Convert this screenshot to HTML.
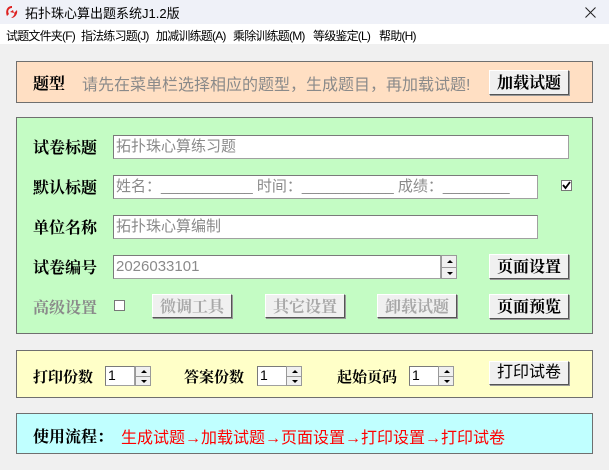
<!DOCTYPE html>
<html><head><meta charset="utf-8"><style>
*{margin:0;padding:0;box-sizing:border-box}
body{width:609px;height:470px;overflow:hidden;background:#f0f0f0;position:relative;font-family:"Liberation Sans","Noto Sans CJK SC","WenQuanYi Zen Hei",sans-serif}
.a{position:absolute}
.title{left:0;top:0;width:609px;height:24px;background:#eff1f8}
.menu{left:0;top:24px;width:609px;height:20px;background:#fff;font-size:12px;color:#000}
.menu span{position:absolute;top:3px;white-space:nowrap;letter-spacing:-0.8px}
.panel{position:absolute;left:16px;width:577px;border:1px solid #6f6f6f}
.lb{position:absolute;font-size:16px;font-weight:bold;color:#000;white-space:nowrap;font-family:"Noto Serif CJK SC","Noto Sans CJK SC",serif}
.in{position:absolute;background:#fff;border:1px solid #a0a0a0;border-top-color:#7a7a7a;border-left-color:#7a7a7a;font-size:15px;color:#8a8a8a;padding-left:2px;line-height:21px;white-space:nowrap;overflow:hidden}
.btn{position:absolute;background:#f0f0f0;border:1px solid #fff;border-right-color:#555;border-bottom-color:#555;box-shadow:1px 1px 0 #999;font-size:16px;font-weight:bold;text-align:center;color:#000;font-family:"Noto Serif CJK SC","Noto Sans CJK SC",serif;line-height:22px}
.dis{color:#a8a8a8}
.sp{position:absolute;width:16px;background:#f0f0f0;border:1px solid #999}
.sp:after{content:"";position:absolute;left:0;right:0;top:50%;border-top:1px solid #999}
.sp i{position:absolute;left:5px;width:0;height:0;border-left:3px solid transparent;border-right:3px solid transparent}
.sp i.u{top:25%;margin-top:-2px;border-bottom:3px solid #000}
.sp i.d{top:75%;margin-top:-1px;border-top:3px solid #000}
.cb{position:absolute;width:11px;height:11px;background:#fff;border:1px solid #777}
</style></head><body>
<div class="a title">
<svg class="a" style="left:4px;top:4px" width="16" height="16" viewBox="0 0 16 16"><path d="M8 2 C3 2 1 7 3 12 L5 10 C3 7 5 4 8 4Z" fill="#d22"/><path d="M6 8 L9 6 L10 9 L13 6 C14 10 11 14 7 14 C10 12 11 10 10 9 Z" fill="#d22"/></svg>
<span class="a" style="left:25px;top:3px;font-size:13px">拓扑珠心算出题系统J1.2版</span>
<svg class="a" style="left:585px;top:7px" width="11" height="11"><path d="M0.5 0.5 L10.5 10.5 M10.5 0.5 L0.5 10.5" stroke="#222" stroke-width="1"/></svg>
</div>
<div class="a menu">
<span style="left:6px">试题文件夹(F)</span><span style="left:81px">指法练习题(J)</span><span style="left:156px">加减训练题(A)</span><span style="left:233px">乘除训练题(M)</span><span style="left:313px">等级鉴定(L)</span><span style="left:379px">帮助(H)</span>
</div>

<div class="panel" style="top:61px;height:42px;background:#ffdfc3"></div>
<div class="lb" style="left:33px;top:71px">题型</div>
<div class="a" style="left:82px;top:71px;font-size:16px;color:#8a8a8a;white-space:nowrap">请先在菜单栏选择相应的题型，生成题目，再加载试题!</div>
<div class="btn" style="left:489px;top:70px;width:80px;height:25px">加载试题</div>

<div class="panel" style="top:117px;height:217px;background:#c4fcc4"></div>
<div class="lb" style="left:33px;top:135px">试卷标题</div>
<div class="in" style="left:113px;top:135px;width:456px;height:24px">拓扑珠心算练习题</div>
<div class="lb" style="left:33px;top:175px">默认标题</div>
<div class="in" style="left:113px;top:175px;width:425px;height:24px">姓名：___________ 时间：___________ 成绩：________</div>
<div class="cb" style="left:561px;top:180px"><svg width="9" height="9" style="position:absolute;left:0;top:0"><path d="M1 4 L3.5 7 L8 1" stroke="#000" stroke-width="1.8" fill="none"/></svg></div>
<div class="lb" style="left:33px;top:215px">单位名称</div>
<div class="in" style="left:113px;top:215px;width:425px;height:24px">拓扑珠心算编制</div>
<div class="lb" style="left:33px;top:255px">试卷编号</div>
<div class="in" style="left:113px;top:255px;width:328px;height:24px">2026033101</div>
<div class="sp" style="left:441px;top:255px;height:24px"><i class="u"></i><i class="d"></i></div>
<div class="btn" style="left:489px;top:254px;width:80px;height:25px">页面设置</div>
<div class="lb" style="left:33px;top:295px;color:#8a8a8a">高级设置</div>
<div class="cb" style="left:114px;top:300px"></div>
<div class="btn dis" style="left:152px;top:294px;width:80px;height:24px">微调工具</div>
<div class="btn dis" style="left:265px;top:294px;width:80px;height:24px">其它设置</div>
<div class="btn dis" style="left:377px;top:294px;width:80px;height:24px">卸载试题</div>
<div class="btn" style="left:489px;top:294px;width:80px;height:25px">页面预览</div>

<div class="panel" style="top:350px;height:48px;background:#ffffc8"></div>
<div class="lb" style="left:33px;top:366px;font-size:15px">打印份数</div>
<div class="in" style="left:105px;top:366px;width:30px;height:20px;color:#000;line-height:17px;font-size:14px">1</div>
<div class="sp" style="left:135px;top:366px;height:20px"><i class="u"></i><i class="d"></i></div>
<div class="lb" style="left:184px;top:366px;font-size:15px">答案份数</div>
<div class="in" style="left:257px;top:366px;width:30px;height:20px;color:#000;line-height:17px;font-size:14px">1</div>
<div class="sp" style="left:286px;top:366px;height:20px"><i class="u"></i><i class="d"></i></div>
<div class="lb" style="left:337px;top:366px;font-size:15px">起始页码</div>
<div class="in" style="left:409px;top:366px;width:30px;height:20px;color:#000;line-height:17px;font-size:14px">1</div>
<div class="sp" style="left:438px;top:366px;height:20px"><i class="u"></i><i class="d"></i></div>
<div class="btn" style="left:489px;top:361px;width:80px;height:24px;font-weight:normal;font-family:'Liberation Sans','Noto Sans CJK SC',sans-serif">打印试卷</div>

<div class="panel" style="top:413px;height:41px;background:#c0ffff"></div>
<div class="lb" style="left:33px;top:424px">使用流程：</div>
<div class="a" style="left:121px;top:424px;font-size:16px;color:#f00;white-space:nowrap">生成试题→加载试题→页面设置→打印设置→打印试卷</div>
</body></html>
